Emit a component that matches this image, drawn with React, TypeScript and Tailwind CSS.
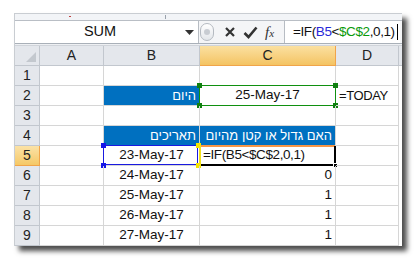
import React from "react";

const font = { fontFamily: '"Liberation Sans", Arial, sans-serif' };

const cols = ["A", "B", "C", "D"];

const dates = ["23-May-17", "24-May-17", "25-May-17", "26-May-17", "27-May-17"];
const flags = ["", "0", "1", "1", "1"];

function Square({ className }: { className: string }) {
  return <span className={`absolute w-[5px] h-[5px] ${className}`} />;
}

function Cell({
  children,
  className = "",
}: {
  children?: React.ReactNode;
  className?: string;
}) {
  return (
    <div
      className={`relative flex items-center h-[20px] border-r border-b border-[#d6d6d6] text-[13.5px] text-[#111] ${className}`}
    >
      {children}
    </div>
  );
}

function RowHead({ n, active }: { n: number; active?: boolean }) {
  return (
    <div
      className={`flex items-center justify-center h-[20px] border-b border-r text-[14px] text-[#222] ${
        active
          ? "bg-gradient-to-b from-[#fbe2a6] to-[#f5c865] border-[#f0a44a]"
          : "bg-[#e4e7ec] border-[#c2c7ce]"
      }`}
    >
      {n}
    </div>
  );
}

export default function App() {
  return (
    <div className="w-[417px] h-[262px] bg-white pt-[13px] pl-[14px]" style={font}>
      <div className="w-[388px] h-[233px] flex flex-col bg-white border-l border-t border-[#c9cdd2] shadow-[5px_5px_5px_rgba(0,0,0,0.7)]">
        {/* ribbon edge */}
        <div className="h-[7px] bg-[#f2f4f7] border-b border-[#b9bec5] relative">
          <span className="absolute left-[54px] top-[2px] w-[2px] h-[1px] bg-[#c04040]" />
          <span className="absolute left-[150px] top-[1px] w-[1px] h-[4px] bg-[#9aa2ac]" />
        </div>

        {/* formula bar */}
        <div className="h-[23px] flex bg-[#f4f5f7] border-b border-[#a9b0b8]">
          <div className="w-[184px] flex items-center bg-white border-r border-[#b7bcc3] relative">
            <span className="flex-1 text-center text-[14.5px] text-[#111]">SUM</span>
            <svg width="9" height="5" viewBox="0 0 9 5" className="mr-[4px]">
              <path d="M0 0h9L4.5 5z" fill="#333" />
            </svg>
          </div>
          <div className="w-[85px] flex items-center">
            <div className="ml-[1px] w-[14px] h-[18px] rounded-full border border-[#b5bac1] bg-gradient-to-b from-white to-[#e3e6ea] flex items-center justify-center">
              <span className="w-[6px] h-[6px] rounded-full bg-[#c8ccd2]" />
            </div>
            <svg width="12" height="12" viewBox="0 0 12 12" className="ml-[10px]">
              <path d="M2 2l8 8M10 2l-8 8" stroke="#333" strokeWidth="2.2" />
            </svg>
            <svg width="15" height="13" viewBox="0 0 15 13" className="ml-[7px]">
              <path d="M1.5 7l4 4L13.5 1.5" stroke="#333" strokeWidth="2.6" fill="none" />
            </svg>
            <span
              className="ml-[7px] text-[15px] italic text-[#333]"
              style={{ fontFamily: '"Liberation Serif", serif' }}
            >
              f<span className="text-[11px]">x</span>
            </span>
          </div>
          <div className="flex-1 flex items-center bg-white border-l border-[#b7bcc3] mr-[2px] pl-[8px] text-[13.5px] tracking-[-0.4px] text-[#111]">
            <span>=IF(</span>
            <span className="text-[#2828d8]">B5</span>
            <span>&lt;</span>
            <span className="text-[#0a9a0a]">$C$2</span>
            <span>,0,1)</span>
            <span className="ml-[2px] w-[1px] h-[16px] bg-black" />
          </div>
        </div>

        <div className="h-[2px] bg-[#eef0f3] border-b border-[#d0d4da]" />

        {/* sheet */}
        <div className="grid grid-cols-[25px_64px_96px_136px_63px_3px]">
          {/* column header */}
          <div className="h-[20px] bg-[#e4e7ec] border-r border-b border-[#c2c7ce] relative">
            <svg width="10" height="10" viewBox="0 0 10 10" className="absolute right-[3px] bottom-[3px]">
              <path d="M10 0V10H0z" fill="#c3c8ce" />
            </svg>
          </div>
          {cols.map((c) => (
            <div
              key={c}
              className={`h-[20px] flex items-center justify-center border-r border-b text-[14px] text-[#222] ${
                c === "C"
                  ? "bg-gradient-to-b from-[#fbe0a0] to-[#f4c462] border-[#f0a44a]"
                  : "bg-[#e4e7ec] border-[#c2c7ce]"
              }`}
            >
              {c}
            </div>
          ))}
          <div className="h-[20px] bg-[#e4e7ec] border-b border-[#c2c7ce]" />

          {/* row 1 */}
          <RowHead n={1} />
          <Cell />
          <Cell />
          <Cell />
          <Cell />
          <div />

          {/* row 2 */}
          <RowHead n={2} />
          <Cell />
          <Cell className="bg-[#0070c0] border-[#0070c0] justify-end pr-[3px] text-white text-[13px]">
            <span dir="rtl">היום</span>
          </Cell>
          <Cell className="justify-center border-[#d6d6d6]">
            <span className="absolute inset-[-1px] border border-[#109010]" />
            <Square className="left-[-3px] top-[-3px] bg-[#108010]" />
            <Square className="right-[-3px] top-[-3px] bg-[#108010]" />
            <Square className="left-[-3px] bottom-[-3px] bg-[#108010]" />
            <Square className="right-[-3px] bottom-[-3px] bg-[#108010]" />
            25-May-17
          </Cell>
          <Cell className="pl-[3px] whitespace-nowrap text-[13px] tracking-[-0.4px]">=TODAY</Cell>
          <div />

          {/* row 3 */}
          <RowHead n={3} />
          <Cell />
          <Cell />
          <Cell />
          <Cell />
          <div />

          {/* row 4 */}
          <RowHead n={4} />
          <Cell />
          <Cell className="bg-[#0070c0] border-[#0070c0] justify-end pr-[3px] text-white text-[13px]">
            <span dir="rtl">תאריכים</span>
          </Cell>
          <Cell className="bg-[#0070c0] border-[#0070c0] justify-end pr-[3px] text-white text-[13px]">
            <span dir="rtl">האם גדול או קטן מהיום</span>
          </Cell>
          <Cell />
          <div />

          {/* rows 5-9 */}
          {dates.map((d, i) => (
            <React.Fragment key={d}>
              <RowHead n={i + 5} active={i === 0} />
              <Cell />
              {i === 0 ? (
                <Cell className="justify-center">
                  <span className="absolute left-[-1px] top-[-1px] right-[1px] bottom-0 border border-[#1a1ae0]" />
                  <Square className="left-[-3px] top-[-3px] bg-[#1515e8]" />
                  <Square className="left-[-3px] bottom-[-3px] bg-[#1515e8]" />
                  <Square className="right-[-2px] top-[-3px] bg-[#f5e600]" />
                  <Square className="right-[-2px] bottom-[-3px] bg-[#f5e600]" />
                  {d}
                </Cell>
              ) : (
                <Cell className="justify-center">{d}</Cell>
              )}
              {i === 0 ? (
                <Cell className="pl-[3px] tracking-[-0.4px]">
                  <span className="absolute inset-x-0 top-[-1px] h-[2px] bg-[#f79646]" />
                  <span className="absolute left-[-1px] top-[-1px] bottom-[-1px] w-[2px] bg-[#f3e21a]" />
                  <span className="absolute right-[-1px] top-0 bottom-[-1px] w-[2px] bg-black" />
                  <span className="absolute left-[1px] right-[-1px] bottom-[-1px] h-[2px] bg-black" />
                  <span className="absolute right-[-3px] bottom-[-3px] w-[5px] h-[5px] bg-black border border-white" />
                  =IF(B5&lt;$C$2,0,1)
                </Cell>
              ) : (
                <Cell className="justify-end pr-[3px]">{flags[i]}</Cell>
              )}
              <Cell />
              <div />
            </React.Fragment>
          ))}
        </div>
      </div>
    </div>
  );
}
